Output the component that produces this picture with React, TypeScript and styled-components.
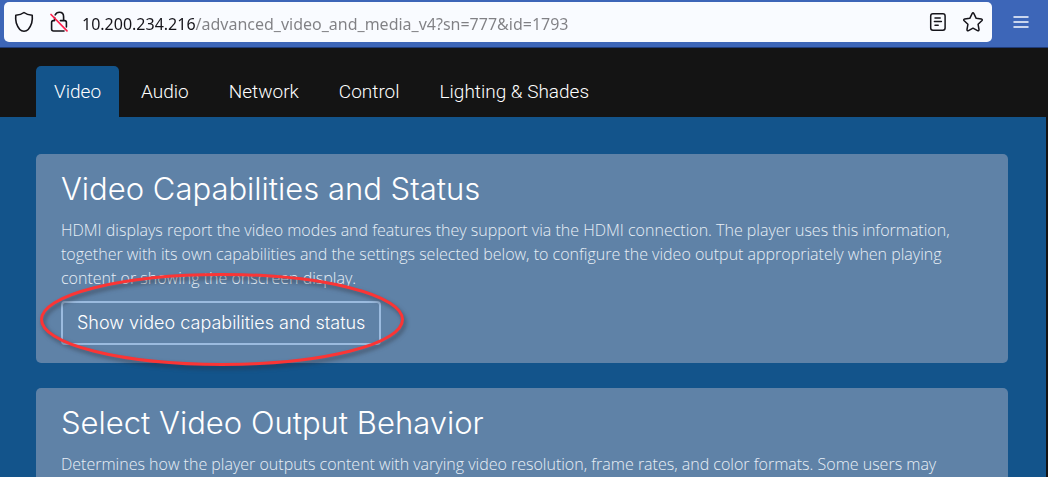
import React from "react";
import styled, { createGlobalStyle } from "styled-components";

const GlobalStyle = createGlobalStyle`
  * { box-sizing: border-box; }
  body { margin: 0; background: #141414; }
`;

const Page = styled.div`
  display: flex;
  flex-direction: column;
  height: 100vh;
  overflow: hidden;
  background: #141414;
  font-family: Roboto, "Liberation Sans", sans-serif;
  font-weight: 300;
`;

const BrowserBar = styled.header`
  display: flex;
  align-items: center;
  flex: none;
  height: 48px;
  padding: 2px 16px 5px 4px;
  background: #3d66b8;
  border-bottom: 1px solid #1f3b78;
`;

const AddressBox = styled.div`
  display: flex;
  align-items: center;
  flex: 1;
  height: 40px;
  padding: 0 8px 0 9px;
  background: #f9fbff;
  border-radius: 5px;
`;

const IconButton = styled.button<{ $light?: boolean }>`
  display: flex;
  align-items: center;
  justify-content: center;
  flex: none;
  width: 22px;
  height: 24px;
  padding: 0;
  border: 0;
  background: none;
  color: ${(p) => (p.$light ? "#f9fbff" : "#15141a")};
`;

const ButtonGroup = styled.div`
  display: flex;
  gap: 13px;
`;

const AddressInput = styled.input`
  flex: 1;
  min-width: 0;
  height: 30px;
  margin: 0 12px;
  padding: 4px 0 0;
  border: 0;
  outline: 0;
  font: 400 16px "Noto Sans", "Open Sans", sans-serif;
  color: #808084;
  background: linear-gradient(to right, #15141a 113px, #808084 113px);
  -webkit-background-clip: text;
  background-clip: text;
  -webkit-text-fill-color: transparent;
`;

const MenuSlot = styled.div`
  margin-left: 18px;
`;

const Tabs = styled.nav`
  display: flex;
  flex: none;
  gap: 4px;
  height: 69px;
  padding: 18px 36px 0;
`;

const Tab = styled.a<{ $active?: boolean }>`
  padding: 0 18px;
  border-radius: 5px 5px 0 0;
  background: ${(p) => (p.$active ? "#13548b" : "transparent")};
  color: #fff;
  font-size: 19px;
  line-height: 51px;
  text-decoration: none;
  white-space: nowrap;
`;

const Content = styled.main`
  display: flex;
  flex-direction: column;
  flex: 1 0 auto;
  gap: 25px;
  margin-right: 2px;
  padding: 37px 38px 37px 36px;
  background: #13548b;
`;

const Card = styled.section`
  padding: 17px 25px 18px;
  border-radius: 5px;
  background: #5f82a7;
`;

const Title = styled.h2`
  margin: 0 0 12px;
  color: #fff;
  font: 300 31px/35px Inter, sans-serif;
`;

const Description = styled.p`
  margin: 0;
  color: #e8eff6;
  font: 300 16px/24px "Open Sans", "Liberation Sans", sans-serif;
`;

const ActionArea = styled.div`
  position: relative;
  display: inline-block;
  margin-top: 11px;
  vertical-align: top;
`;

const OutlineButton = styled.button`
  display: block;
  height: 44px;
  padding: 0 14px;
  border: 2px solid #9bbbdf;
  border-radius: 4px;
  background: transparent;
  color: #fff;
  font: 300 18px/40px Inter, sans-serif;
  white-space: nowrap;
`;

const Highlight = styled.svg`
  position: absolute;
  top: -30px;
  left: -23px;
  overflow: visible;
  pointer-events: none;
  filter: drop-shadow(2px 3px 2px rgba(40, 40, 50, 0.55));
`;

const ShieldIcon = () => (
  <svg width="20" height="22" viewBox="0 0 20 22" fill="none" stroke="currentColor" strokeWidth="1.6" strokeLinejoin="round">
    <path d="M10 1.5 C7.5 3.5 4.5 4 1.8 4.2 C1.5 7 1.5 9.5 2.3 12 C3.7 16.2 6.6 20.3 10 20.3 C13.4 20.3 16.3 16.2 17.7 12 C18.5 9.5 18.5 7 18.2 4.2 C15.5 4 12.5 3.5 10 1.5 Z" />
  </svg>
);

const InsecureIcon = () => (
  <svg width="20" height="22" viewBox="0 0 20 22" fill="none" stroke="currentColor" strokeWidth="1.6" strokeLinecap="round" strokeLinejoin="round">
    <path d="M6.2 3.9 C7.3 1.7 9 1.3 10.4 1.3 C13 1.3 14.6 3.3 14.6 5.8 V9.3 M5.6 6.6 V9.6 H4.4 C3.2 9.6 2.6 10.4 2.6 11.4 V18 C2.6 19.4 3.4 20 4.6 20 H15 M11.4 9.6 H15.6 C16.7 9.6 17.4 10.4 17.4 11.4 V16" />
    <path d="M2 3.5 L18 19.8" stroke="#ff1f4b" strokeWidth="1.7" />
  </svg>
);

const ReaderIcon = () => (
  <svg width="18" height="20" viewBox="0 0 18 20" fill="none" stroke="currentColor" strokeWidth="1.5" strokeLinecap="round">
    <rect x="1.7" y="1.7" width="14.4" height="16.6" rx="2.2" />
    <path d="M6 5.9H11.2M5.4 9.6H12.4M6 13.3H9.2" />
  </svg>
);

const StarIcon = () => (
  <svg width="22" height="22" viewBox="0 0 22 22" fill="none" stroke="currentColor" strokeWidth="1.5" strokeLinejoin="round">
    <path d="M10.1 2.6 Q11 1 11.9 2.6 L14.2 7.3 L19.3 8 Q21 8.4 19.8 9.8 L16.1 13.3 L17 18.5 Q17.1 20.2 15.5 19.6 L11 17.2 L6.5 19.6 Q4.9 20.2 5 18.5 L5.9 13.3 L2.2 9.8 Q1 8.4 2.7 8 L7.8 7.3 Z" />
  </svg>
);

const MenuIcon = () => (
  <svg width="16" height="14" viewBox="0 0 16 14" stroke="currentColor" strokeWidth="1.5" strokeLinecap="round">
    <path d="M1 2H15M1 7H15M1 12H15" />
  </svg>
);

const tabs = ["Video", "Audio", "Network", "Control", "Lighting & Shades"];

export default function App() {
  return (
    <Page>
      <GlobalStyle />
      <BrowserBar>
        <AddressBox>
          <ButtonGroup>
            <IconButton aria-label="Tracking protection"><ShieldIcon /></IconButton>
            <IconButton aria-label="Connection not secure"><InsecureIcon /></IconButton>
          </ButtonGroup>
          <AddressInput
            aria-label="Address"
            spellCheck={false}
            defaultValue="10.200.234.216/advanced_video_and_media_v4?sn=777&id=1793"
          />
          <ButtonGroup>
            <IconButton aria-label="Reader view"><ReaderIcon /></IconButton>
            <IconButton aria-label="Bookmark this page"><StarIcon /></IconButton>
          </ButtonGroup>
        </AddressBox>
        <MenuSlot>
          <IconButton $light aria-label="Open menu"><MenuIcon /></IconButton>
        </MenuSlot>
      </BrowserBar>
      <Tabs>
        {tabs.map((name) => (
          <Tab key={name} href="#" $active={name === "Video"}>{name}</Tab>
        ))}
      </Tabs>
      <Content>
        <Card>
          <Title>Video Capabilities and Status</Title>
          <Description>
            HDMI displays report the video modes and features they support via the HDMI connection. The player uses this information,
            together with its own capabilities and the settings selected below, to configure the video output appropriately when playing
            content or showing the onscreen display.
          </Description>
          <ActionArea>
            <OutlineButton>Show video capabilities and status</OutlineButton>
            <Highlight width="368" height="96" viewBox="0 0 368 96" fill="none" aria-hidden="true">
              <ellipse cx="184" cy="48.5" rx="180.5" ry="45" stroke="#fb3535" strokeWidth="3" />
            </Highlight>
          </ActionArea>
        </Card>
        <Card>
          <Title>Select Video Output Behavior</Title>
          <Description>
            Determines how the player outputs content with varying video resolution, frame rates, and color formats. Some users may
          </Description>
        </Card>
      </Content>
    </Page>
  );
}
